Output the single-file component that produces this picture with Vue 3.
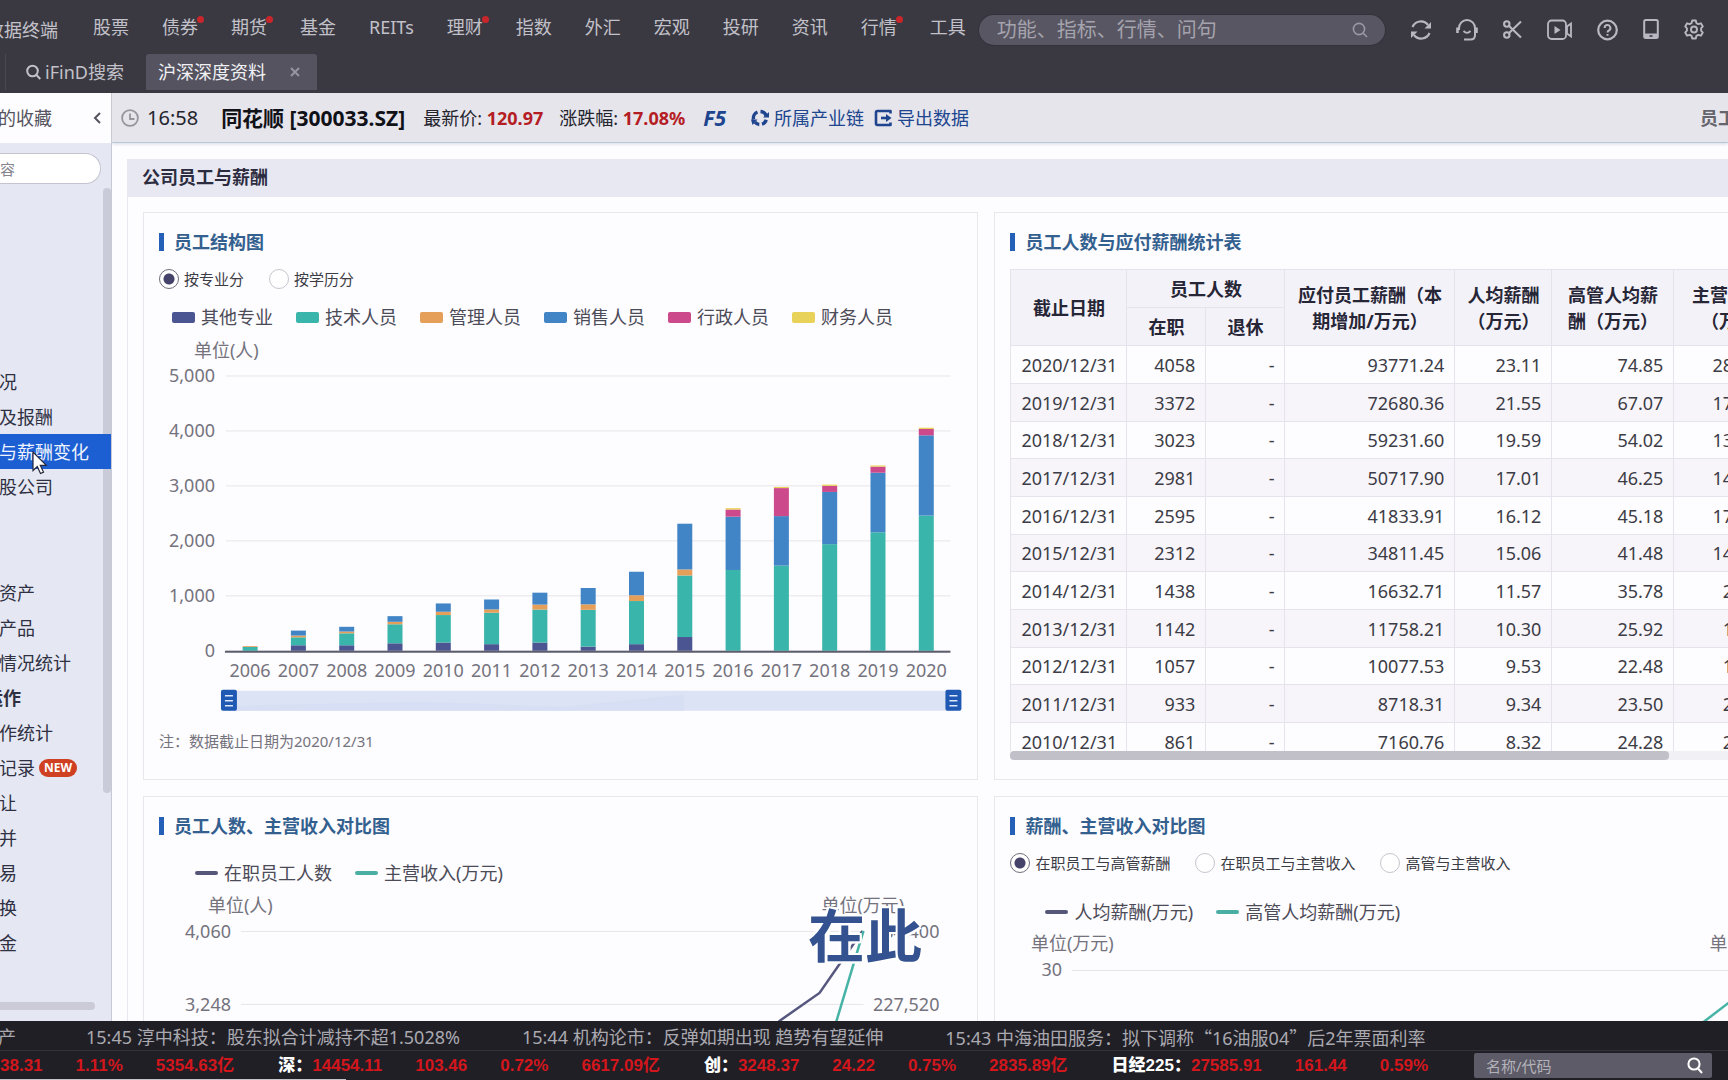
<script setup>
import { ref } from 'vue'

const menus = [
  { name: '股票' }, { name: '债券', dot: true }, { name: '期货', dot: true }, { name: '基金' },
  { name: 'REITs' }, { name: '理财', dot: true }, { name: '指数' }, { name: '外汇' },
  { name: '宏观' }, { name: '投研' }, { name: '资讯' }, { name: '行情', dot: true }, { name: '工具' },
]

const sideGroups = [
  [{ name: '况' }, { name: '及报酬' }, { name: '与薪酬变化', active: true }, { name: '股公司' }],
  [{ name: '资产' }, { name: '产品' }, { name: '情况统计' }],
  [
    { name: '运作', head: true }, { name: '作统计' }, { name: '记录', fresh: true }, { name: '让' },
    { name: '并' }, { name: '易' }, { name: '换' }, { name: '金' },
  ],
]

const series = [
  { name: '其他专业', color: '#4a5592' },
  { name: '技术人员', color: '#3ab5ab' },
  { name: '管理人员', color: '#e69f58' },
  { name: '销售人员', color: '#4285c6' },
  { name: '行政人员', color: '#cc4a8c' },
  { name: '财务人员', color: '#e8d25a' },
]
const staff = [
  [2006, [0, 70, 15, 0, 0, 0]],
  [2007, [100, 145, 32, 90, 0, 0]],
  [2008, [100, 218, 32, 86, 0, 0]],
  [2009, [136, 346, 45, 103, 0, 0]],
  [2010, [150, 500, 60, 151, 0, 0]],
  [2011, [120, 573, 60, 180, 0, 0]],
  [2012, [150, 600, 90, 217, 0, 0]],
  [2013, [75, 670, 100, 297, 0, 0]],
  [2014, [120, 785, 105, 428, 0, 0]],
  [2015, [250, 1120, 110, 832, 0, 0]],
  [2016, [0, 1470, 0, 970, 130, 25]],
  [2017, [0, 1550, 0, 900, 510, 21]],
  [2018, [0, 1940, 0, 950, 110, 23]],
  [2019, [0, 2155, 0, 1085, 110, 22]],
  [2020, [0, 2460, 0, 1460, 115, 23]],
]
const plot = { left: 82, right: 807, base: 322, perThousand: 55 }
const ticks = [5000, 4000, 3000, 2000, 1000, 0].map((v) => ({
  label: v.toLocaleString('en-US'),
  y: plot.base - (v / 1000) * plot.perThousand,
}))
const slot = (plot.right - plot.left) / staff.length
const bars = staff.map(([year, values], i) => {
  let y = plot.base
  const x = plot.left + slot * (i + 0.5)
  const parts = values.map((v, k) => {
    const h = (v / 1000) * plot.perThousand
    y -= h
    return { y, h, color: series[k].color }
  })
  return { year, x, parts: parts.filter((p) => p.h > 0) }
})

const rows = [
  ['2020/12/31', '4058', '-', '93771.24', '23.11', '74.85', '284397.9'],
  ['2019/12/31', '3372', '-', '72680.36', '21.55', '67.07', '174208.9'],
  ['2018/12/31', '3023', '-', '59231.60', '19.59', '54.02', '138689.1'],
  ['2017/12/31', '2981', '-', '50717.90', '17.01', '46.25', '140965.9'],
  ['2016/12/31', '2595', '-', '41833.91', '16.12', '45.18', '173366.4'],
  ['2015/12/31', '2312', '-', '34811.45', '15.06', '41.48', '144194.2'],
  ['2014/12/31', '1438', '-', '16632.71', '11.57', '35.78', '26598.1'],
  ['2013/12/31', '1142', '-', '11758.21', '10.30', '25.92', '18393.4'],
  ['2012/12/31', '1057', '-', '10077.53', '9.53', '22.48', '17208.1'],
  ['2011/12/31', '933', '-', '8718.31', '9.34', '23.50', '21379.9'],
  ['2010/12/31', '861', '-', '7160.76', '8.32', '24.28', '21422.4'],
]

const splitBy = ref('专业')
const payBy = ref('在职员工与高管薪酬')
const payOptions = ['在职员工与高管薪酬', '在职员工与主营收入', '高管与主营收入']

// Chinese quotation marks are split off so that they are set full width
const news = [
  '产',
  '15:45 淳中科技：股东拟合计减持不超1.5028%',
  '15:44 机构论市：反弹如期出现 趋势有望延伸',
  '15:43 中海油田服务：拟下调称“16油服04”后2年票面利率',
].map((text) => text.split(/([“”])/))
const isQuote = (s) => s === '“' || s === '”'

const quotes = [
  { name: '', values: ['38.31', '1.11%', '5354.63亿'] },
  { name: '深：', values: ['14454.11', '103.46', '0.72%', '6617.09亿'] },
  { name: '创：', values: ['3248.37', '24.22', '0.75%', '2835.89亿'] },
  { name: '日经225：', values: ['27585.91', '161.44', '0.59%'] },
]
</script>

<template>
  <div class="shell">
    <header class="header">
      <div class="menu-row">
        <div class="brand"><span>数据终端</span></div>
        <nav class="menu">
          <a v-for="m in menus" :key="m.name" href="#">{{ m.name }}<i v-if="m.dot" class="dot"></i></a>
        </nav>
        <label class="search">
          <input type="text" aria-label="搜索" placeholder="功能、指标、行情、问句" />
          <svg width="16" height="16" viewBox="0 0 16 16" fill="none" stroke="#9a98a3" stroke-width="1.6">
            <circle cx="7" cy="7" r="5.6" /><path d="M11 11l4 4" />
          </svg>
        </label>
        <div class="tools">
          <button type="button" aria-label="刷新">
            <svg width="20" height="22" viewBox="0 0 20 22" fill="none" stroke="currentColor" stroke-width="2.200">
              <path d="M1.500 8A9 9 0 0 1 17 6M18.500 14A9 9 0 0 1 3 16" />
              <path d="M20 3v6.500h-6.500zM0 19v-6.500h6.500z" fill="currentColor" stroke="none" />
            </svg>
          </button>
          <button type="button" aria-label="客服">
            <svg width="22" height="22" viewBox="0 0 22 22" fill="none" stroke="currentColor" stroke-width="2">
              <path d="M3 11V9a8 8 0 0 1 16 0v7q0 4.500-4.500 4.500H8" />
              <path d="M1.500 8.500v5.500M20.500 8.500v5.500" stroke-width="2.600" />
              <path d="M7.500 12q3.500 3.600 7 0" stroke-width="1.800" />
            </svg>
          </button>
          <button type="button" aria-label="截图">
            <svg width="19" height="20" viewBox="0 0 19 20" fill="none" stroke="currentColor" stroke-width="2.100">
              <circle cx="3.800" cy="4" r="2.700" /><circle cx="3.800" cy="15" r="2.700" />
              <path d="M5.800 5.800L18 17.500M5.800 13.200L18 1.500" />
            </svg>
          </button>
          <button type="button" aria-label="视频">
            <svg width="25" height="22" viewBox="0 0 25 22" fill="none" stroke="currentColor" stroke-width="1.800">
              <rect x="1" y="1.500" width="18" height="18.500" rx="3.500" />
              <path d="M20 7.500l4-3v13l-4-3z" />
              <path d="M7.500 7v8l6-4z" fill="currentColor" stroke="none" />
            </svg>
          </button>
          <button type="button" aria-label="帮助">
            <svg width="21" height="22" viewBox="0 0 21 22" fill="none" stroke="currentColor" stroke-width="2.200">
              <circle cx="10.500" cy="11" r="9.300" />
              <path d="M7.600 9a2.900 2.900 0 1 1 4.300 2.500q-1.400.7-1.400 2.100M10.500 14.900v1.900" stroke-width="2" />
            </svg>
          </button>
          <button type="button" aria-label="手机">
            <svg width="16" height="24" viewBox="0 0 16 24" fill="none" stroke="currentColor" stroke-width="2">
              <rect x="1.200" y="2" width="13.600" height="18" rx="1.500" />
              <path d="M1 15.500h14V20H1z" fill="currentColor" stroke="none" />
              <path d="M6.500 18h3" stroke="#3a3942" stroke-width="1.600" />
            </svg>
          </button>
          <button type="button" aria-label="设置">
            <svg width="20" height="22" viewBox="0 0 20 22" fill="none" stroke="currentColor" stroke-width="1.900" stroke-linejoin="round">
              <path d="M8.200 1.500h3.600l.6 2.600 1.900 1 2.600-.8 1.900 3.100-1.700 1.900v2.400l1.700 1.900-1.900 3.100-2.600-.8-1.900 1-.6 2.600H8.200l-.6-2.600-1.900-1-2.600.8-1.900-3.100 1.700-1.900V9.300L1.200 7.400l1.900-3.100 2.600.8 1.900-1z" />
              <circle cx="10" cy="10.500" r="3" />
            </svg>
          </button>
        </div>
      </div>
      <div class="tabs">
        <button type="button" class="tab">
          <svg width="15" height="16" viewBox="0 0 15 16" fill="none" stroke="currentColor" stroke-width="2">
            <circle cx="6.500" cy="7" r="5.300" /><path d="M10.500 11l3.800 4" />
          </svg>
          iFinD搜索
        </button>
        <button type="button" class="tab current">
          沪深深度资料
          <svg width="10" height="10" viewBox="0 0 10 10" stroke="#9795a0" stroke-width="2"><path d="M1 1l8 8M9 1L1 9" /></svg>
        </button>
      </div>
    </header>

    <div class="body">
      <aside class="side">
        <div class="fav">
          <span>的收藏</span>
          <svg width="8" height="12" viewBox="0 0 8 12" fill="none" stroke="#55545f" stroke-width="2"><path d="M7 1L2 6l5 5" /></svg>
        </div>
        <input class="side-search" type="text" aria-label="内容" placeholder="容" />
        <nav class="side-nav">
          <div v-for="(g, i) in sideGroups" :key="i" class="group">
            <a
              v-for="s in g" :key="s.name" href="#"
              :class="{ active: s.active, head: s.head }"
            >{{ s.name }}<b v-if="s.fresh" class="fresh">NEW</b></a>
          </div>
        </nav>
        <div class="v-bar"></div>
        <div class="h-bar"></div>
        <svg class="cursor" width="17" height="24" viewBox="0 0 17 24">
          <path d="M1 1v18.500l4.300-4 3.200 7 3-1.400-3.200-6.800h6z" fill="#fff" stroke="#26273a" stroke-width="1.200" />
        </svg>
      </aside>

      <main class="main">
        <div class="stock-bar">
          <svg width="18" height="18" viewBox="0 0 18 18" fill="none" stroke="#96959e" stroke-width="1.800">
            <circle cx="9" cy="9" r="7.900" /><path d="M9 4.500V10h4.500" />
          </svg>
          <span class="time">16:58</span>
          <strong class="stock">同花顺 [300033.SZ]</strong>
          <span class="price">最新价: <b>120.97</b></span>
          <span class="change">涨跌幅: <b>17.08%</b></span>
          <em class="f5">F5</em>
          <a href="#" class="chain">
            <svg width="18" height="18" viewBox="0 0 18 18" fill="none" stroke="currentColor" stroke-width="3.400">
              <path d="M2.600 10.500A6.500 6.500 0 0 1 6.500 3M9.500 2.500a6.500 6.500 0 0 1 5.900 5M15.200 10.800a6.500 6.500 0 0 1-4.200 4.400M8.300 15.500a6.500 6.500 0 0 1-4.300-2.300" />
              <path d="M12 8.500h6V3zM0 10.500h6.500L1.500 16z" fill="currentColor" stroke="none" />
            </svg>
            所属产业链
          </a>
          <a href="#" class="export">
            <svg width="18" height="18" viewBox="0 0 18 18" fill="none" stroke="currentColor" stroke-width="2.600">
              <path d="M16.500 4.500V2h-13Q2 2 2 3.500v11Q2 16 3.500 16h13v-2.500" stroke-linejoin="round" /><path d="M7 9h6" />
              <path d="M12 5v8l5.500-4z" fill="currentColor" stroke="none" />
            </svg>
            导出数据
          </a>
          <strong class="crumb">员工与薪酬变化</strong>
        </div>

        <div class="scroll">
          <section class="section">
            <h2>公司员工与薪酬</h2>
            <div class="cards">
              <article class="card">
                <h3>员工结构图</h3>
                <div class="radios">
                  <label><input v-model="splitBy" type="radio" name="split" value="专业" />按专业分</label>
                  <label><input v-model="splitBy" type="radio" name="split" value="学历" />按学历分</label>
                </div>
                <ul class="legend blocks">
                  <li v-for="s in series" :key="s.name"><i :style="{ background: s.color }"></i>{{ s.name }}</li>
                </ul>
                <svg class="chart" viewBox="0 0 834 396">
                  <text x="50" y="28">单位(人)</text>
                  <g v-for="t in ticks" :key="t.label">
                    <line :x1="plot.left" :x2="plot.right" :y1="t.y" :y2="t.y" stroke="#e6e5ea" />
                    <text x="71" :y="t.y + 6" text-anchor="end">{{ t.label }}</text>
                  </g>
                  <g v-for="b in bars" :key="b.year">
                    <rect v-for="(p, i) in b.parts" :key="i" :x="b.x - 7.5" :y="p.y" width="15" :height="p.h" :fill="p.color" />
                    <text :x="b.x" y="348" text-anchor="middle">{{ b.year }}</text>
                  </g>
                  <line :x1="plot.left - 1" :x2="plot.right" y1="323" y2="323" stroke="#5c5d6c" stroke-width="2" />
                  <rect x="85" y="362" width="725" height="20" fill="#dce3f5" />
                  <path d="M85 377L280 373 420 378 540 366V382H85z" fill="#d6dff3" />
                  <g v-for="x in [77, 802]" :key="x">
                    <rect :x="x" y="361" width="16" height="21" rx="2" fill="#2059b4" />
                    <path :d="`M${x + 4} 367h8M${x + 4} 372h8M${x + 4} 377h8`" stroke="#dfe8fa" stroke-width="1.500" />
                  </g>
                </svg>
                <p class="note">注：数据截止日期为2020/12/31</p>
              </article>

              <article class="card">
                <h3>员工人数与应付薪酬统计表</h3>
                <div class="table-box">
                  <table>
                    <colgroup>
                      <col class="c-date" /><col class="c-num" /><col class="c-num" /><col class="c-pay" />
                      <col class="c-avg" /><col class="c-exec" /><col class="c-rev" /><col />
                    </colgroup>
                    <thead>
                      <tr>
                        <th rowspan="2">截止日期</th>
                        <th colspan="2">员工人数</th>
                        <th rowspan="2">应付员工薪酬（本期增加/万元）</th>
                        <th rowspan="2">人均薪酬（万元）</th>
                        <th rowspan="2">高管人均薪酬（万元）</th>
                        <th rowspan="2">主营业收入<br />（万元）</th>
                        <th rowspan="2"></th>
                      </tr>
                      <tr><th>在职</th><th>退休</th></tr>
                    </thead>
                    <tbody>
                      <tr v-for="r in rows" :key="r[0]">
                        <td v-for="(c, i) in r" :key="i">{{ c }}</td>
                        <td></td>
                      </tr>
                    </tbody>
                  </table>
                </div>
                <div class="table-bar"><div></div></div>
              </article>

              <article class="card">
                <h3>员工人数、主营收入对比图</h3>
                <ul class="legend lines">
                  <li><i class="navy"></i>在职员工人数</li>
                  <li><i class="teal"></i>主营收入(万元)</li>
                </ul>
                <svg class="chart" viewBox="0 0 834 396">
                  <text x="64" y="27">单位(人)</text>
                  <text x="678" y="27">单位(万元)</text>
                  <line x1="97" x2="720" y1="46.500" y2="46.500" stroke="#e6e5ea" />
                  <line x1="97" x2="720" y1="119.500" y2="119.500" stroke="#e6e5ea" />
                  <text x="87" y="53" text-anchor="end">4,060</text>
                  <text x="87" y="126" text-anchor="end">3,248</text>
                  <text x="796" y="53" text-anchor="end">284,400</text>
                  <text x="796" y="126" text-anchor="end">227,520</text>
                  <path d="M590 185L636 136 676 108 719 46" fill="none" stroke="#56577f" stroke-width="2.500" />
                  <path d="M680 185L693 136 720 46" fill="none" stroke="#46b3a6" stroke-width="2.500" />
                </svg>
                <div class="caption">在此</div>
              </article>

              <article class="card">
                <h3>薪酬、主营收入对比图</h3>
                <div class="radios">
                  <label v-for="o in payOptions" :key="o"><input v-model="payBy" type="radio" name="pay" :value="o" />{{ o }}</label>
                </div>
                <ul class="legend lines pay">
                  <li><i class="navy"></i>人均薪酬(万元)</li>
                  <li><i class="teal"></i>高管人均薪酬(万元)</li>
                </ul>
                <svg class="chart" viewBox="0 0 834 396">
                  <text x="36" y="26">单位(万元)</text>
                  <text x="715" y="26">单位(万元)</text>
                  <line x1="77" x2="756" y1="46.500" y2="46.500" stroke="#e6e5ea" />
                  <text x="67" y="52" text-anchor="end">30</text>
                  <path d="M700 105L756 62" fill="none" stroke="#46b3a6" stroke-width="2.500" />
                </svg>
              </article>
            </div>
          </section>
        </div>
      </main>
    </div>

    <footer class="footer">
      <div class="news">
        <a v-for="(n, i) in news" :key="i" href="#"><span v-for="(s, k) in n" :key="k" :class="{ cjk: isQuote(s) }">{{ s }}</span></a>
      </div>
      <div class="quotes">
        <div v-for="q in quotes" :key="q.name" class="quote">
          <strong v-if="q.name">{{ q.name }}</strong>
          <span v-for="v in q.values" :key="v">{{ v }}</span>
        </div>
        <label class="code">
          <input type="text" aria-label="名称/代码" placeholder="名称/代码" />
          <svg width="16" height="17" viewBox="0 0 16 17" fill="none" stroke="#fff" stroke-width="2">
            <circle cx="7" cy="7" r="5.600" /><path d="M11 11.500l4 4.500" />
          </svg>
        </label>
      </div>
      <div class="strip"></div>
    </footer>
  </div>
</template>

<style>
body { margin: 0; }
</style>

<style scoped>
.shell {
  display: flex;
  flex-direction: column;
  height: 100vh;
  overflow: hidden;
  font: 18px/24px "Noto Sans", "Noto Sans CJK SC", sans-serif;
  color: #3c3c46;
  background: #fdfcfe;
  white-space: nowrap;
}
.shell *, .shell *::before { box-sizing: border-box; }
a { color: inherit; text-decoration: none; }
button { border: 0; padding: 0; background: none; color: inherit; font: inherit; }
input { font: inherit; }
h2, h3, p, ul { margin: 0; padding: 0; list-style: none; }
svg { flex: none; display: block; }

.header { flex: none; height: 93px; background: #3a3942; color: #c2c1c9; }
.menu-row { display: flex; align-items: center; height: 54px; padding: 2px 24px 0 0; }
.brand { display: flex; justify-content: flex-end; width: 58px; padding-top: 3px; overflow: hidden; }
.menu { display: flex; gap: 33px; margin: 0 13px 2px 35px; }
.menu a { position: relative; }
.dot { position: absolute; top: 1px; right: -6px; width: 7px; height: 7px; border-radius: 50%; background: #c9262c; }
.search {
  display: flex;
  flex: 1;
  align-items: center;
  height: 30px;
  margin: 4px 26px 0 0;
  padding: 0 17px 0 18px;
  border-radius: 15px;
  background: #585662;
  box-shadow: 0 0 0 1px #33323a;
}
.search input { flex: 1; min-width: 0; padding: 0; border: 0; outline: 0; background: none; color: #fff; font-size: 20px; }
.search input::placeholder { color: #a5a3ad; opacity: 1; }
.tools { display: flex; align-items: center; gap: 25px; padding-top: 3px; color: #b9b8c2; }

.tabs { display: flex; height: 36px; margin-left: 5px; border-left: 1px solid #4b4a54; }
.tab { display: flex; align-items: center; gap: 4px; padding: 0 22px 0 20px; }
.tab.current { gap: 24px; height: 36px; padding: 0 17px 0 12px; border-radius: 3px 3px 0 0; background: #55535f; color: #f1f1f5; }

.body { display: flex; flex: 1; min-height: 0; }
.side { position: relative; flex: none; width: 112px; overflow: hidden; background: #e5e8f3; border-right: 1px solid #c9c9d4; color: #2f3042; }
.fav { display: flex; align-items: center; justify-content: space-between; height: 50px; padding: 0 10px 0 0; background: #fdfcfe; color: #55545f; }
.fav span { margin-left: -2px; }
.side-search {
  display: block;
  width: 101px;
  height: 31px;
  margin: 10px 0 0;
  padding: 0;
  border: 1px solid #c4c4d0;
  border-left: 0;
  border-radius: 0 16px 16px 0;
  background: #fff;
  font-size: 15px;
}
.side-search::placeholder { color: #85848f; opacity: 1; }
.side-nav { padding-top: 180px; }
.group { margin-bottom: 71px; }
.group + .group + .group { margin-top: -71px; }
.group a { display: flex; align-items: center; height: 35px; margin-left: -1px; padding-right: 24px; }
.group a.active { position: relative; z-index: 1; background: #1c5fd2; color: #eef3ff; }
.group a.head { margin-left: -15px; font-weight: 700; }
.fresh { margin-left: 4px; padding: 0 5px; border-radius: 9px; background: #cf4022; color: #fff; font-size: 12px; line-height: 18px; }
.v-bar { position: absolute; top: 95px; right: 0; width: 8px; height: 605px; border-radius: 4px; background: rgba(184, 184, 200, .6); }
.h-bar { position: absolute; bottom: 11px; left: 0; width: 95px; height: 8px; border-radius: 0 4px 4px 0; background: #cbcbd7; }
.cursor { position: absolute; top: 358px; left: 32px; z-index: 2; }

.main { display: flex; flex: 1; flex-direction: column; min-width: 0; overflow: hidden; }
.stock-bar {
  display: flex;
  flex: none;
  align-items: center;
  height: 50px;
  padding-left: 9px;
  background: #e6e5ec;
  border-bottom: 1px solid #b9c8d6;
  box-shadow: 0 1px 3px #d5dbe6;
  color: #24242c;
}
.stock-bar b { color: #b51d24; }
.time { margin-left: 8px; font-size: 20px; }
.stock { margin-left: 23px; font-size: 21px; color: #111118; }
.price { margin-left: 18px; }
.change { margin-left: 16px; }
.f5 { margin-left: 18px; color: #20458f; font-size: 21px; font-weight: 700; }
.stock-bar a { display: flex; align-items: center; gap: 5px; color: #20458f; }
.chain { margin-left: 25px; }
.export { margin-left: 10px; }
.crumb { margin-left: auto; margin-right: -98px; color: #66656e; }

.scroll { flex: 1; min-height: 0; overflow: hidden; padding: 16px 0 0 15px; }
.section { width: 107.3%; border-left: 1px solid #e8e8f0; }
h2 { height: 38px; padding-left: 14px; background: #e8e8f3; color: #2c2c40; font-size: 18px; line-height: 36px; }
.cards { display: grid; grid-template-columns: minmax(0, 1fr) minmax(0, 1fr); gap: 16px; padding: 15px; }
.card { position: relative; min-height: 568px; padding: 17px 15px; border: 1px solid #e9e7ee; background: #fdfcfe; }
h3 { display: flex; align-items: center; height: 24px; color: #33608f; font-size: 18px; }
h3::before { content: ""; width: 5px; height: 18px; margin-right: 10px; background: #2460b8; }

.radios { display: flex; gap: 25px; height: 20px; margin-top: 15px; font-size: 15px; }
.radios label { display: flex; align-items: center; gap: 5px; }
.radios input { appearance: none; width: 20px; height: 20px; margin: 0; border: 1px solid #c6c5cf; border-radius: 50%; background: #fff; }
.radios input:checked { border-color: #6f6e7c; background: radial-gradient(circle, #45436a 5px, #fff 6px); }

.legend { display: flex; gap: 23px; height: 24px; color: #4c4b58; }
.legend li { display: flex; align-items: center; gap: 6px; }
.legend i { width: 23px; height: 4px; border-radius: 2px; }
.blocks { margin: 16px 0 0 13px; }
.blocks i { height: 11px; }
.lines { margin: 23px 0 0 36px; }
.lines.pay { margin-top: 27px; margin-left: 35px; }
.navy { background: #55567a; }
.teal { background: #4aaea3; }
.chart { width: calc(100% + 30px); margin: 0 -15px; overflow: hidden; }
.chart text { fill: #74737d; font-size: 18px; }
.note { margin-top: 4px; color: #74737d; font-size: 15px; }

.table-box { height: 482px; margin-top: 15px; overflow: hidden; }
table { width: 100%; border-collapse: collapse; table-layout: fixed; }
.c-date { width: 116px; }
.c-num { width: 79px; }
.c-pay { width: 170px; }
.c-avg { width: 97px; }
.c-exec { width: 122px; }
.c-rev { width: 126px; }
th, td { border: 1px solid #e5e3eb; }
th { height: 38px; padding: 0 9px; background: #f4f2f9; color: #262636; line-height: 26px; white-space: normal; }
td { height: 38px; padding: 0 10px; text-align: right; }
tr:nth-child(3n) td { height: 37px; }
tr:nth-child(even) td { background: #f7f5fa; }
.table-bar { border-radius: 4px; background: #f1f1f5; }
.table-bar div { width: 82%; height: 9px; border-radius: 4px; background: #c1c0c8; }

.caption {
  position: absolute;
  top: 98px;
  left: 664px;
  color: #34528f;
  font-size: 57px;
  font-weight: 700;
  line-height: 80px;
  text-shadow: 2px 0 #fff, -2px 0 #fff, 0 2px #fff, 0 -2px #fff, 2px 2px #fff, -2px -2px #fff, 2px -2px #fff, -2px 2px #fff;
}

.footer { position: relative; flex: none; height: 59px; overflow: hidden; background: #201f26; color: #aaa9b0; }
.news { display: flex; gap: 62px; align-items: center; height: 30px; padding-top: 3px; border-bottom: 1px solid #34333c; }
.news a:first-child { margin: 0 8px 0 -2px; }
.cjk { font-family: "Noto Sans CJK SC", sans-serif; }
.quotes { display: flex; align-items: center; height: 29px; padding-right: 16px; }
.quote { display: flex; gap: 33px; margin-right: 44px; color: #d2161c; font: 700 17px/24px "Liberation Sans", "Noto Sans CJK SC", sans-serif; }
.quote strong { margin-right: -33px; color: #fff; }
.code { display: flex; align-items: center; width: 238px; height: 25px; margin-left: auto; padding: 0 9px 0 12px; border-radius: 2px; background: #5d5b67; }
.code input { flex: 1; min-width: 0; padding: 0; border: 0; outline: 0; background: none; color: #fff; font-size: 15px; }
.code input::placeholder { color: #b3b2ba; opacity: 1; }
.strip { position: absolute; bottom: 0; left: 0; width: 20%; height: 1px; background: #c4c4ca; }
</style>
